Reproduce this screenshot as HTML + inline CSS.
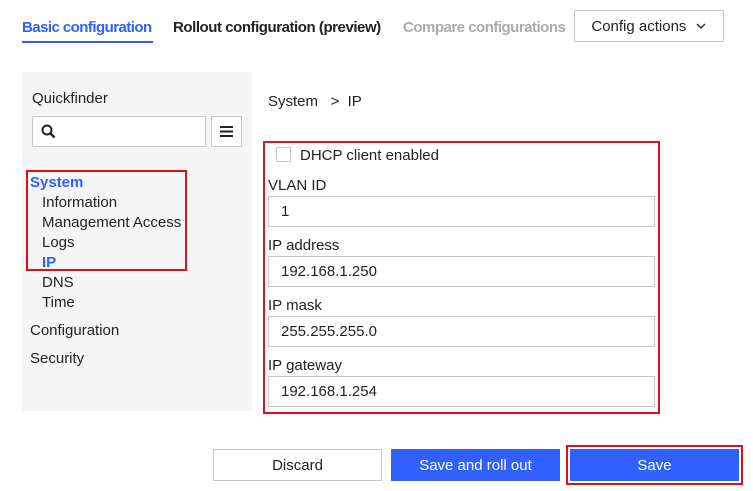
<!DOCTYPE html>
<html><head><style>
*{box-sizing:border-box;margin:0;padding:0}
body{width:753px;height:491px;background:#fff;font-family:"Liberation Sans",sans-serif;color:#222;position:relative;overflow:hidden;font-size:15px}
.a{position:absolute;white-space:nowrap}
.inp{position:absolute;border:1px solid #c8c8c8;background:#fff}
.btn{position:absolute;display:flex;align-items:center;justify-content:center;font-size:15px}
</style></head><body>
<div class="a" style="left:22px;top:19px;font-size:15px;color:#2f5fff;font-weight:bold;letter-spacing:-0.55px">Basic configuration</div>
<div class="a" style="left:22px;top:41px;width:131px;height:2px;background:#2f5fff"></div>
<div class="a" style="left:173px;top:19px;font-size:15px;font-weight:bold;color:#222;letter-spacing:-0.45px">Rollout configuration (preview)</div>
<div class="a" style="left:403px;top:19px;font-size:15px;font-weight:bold;color:#aaa;letter-spacing:-0.5px">Compare configurations</div>
<div class="btn" style="left:574px;top:10px;width:150px;height:32px;border:1px solid #c8c8c8;font-size:15px">Config actions&nbsp;<svg width="12" height="8" viewBox="0 0 12 8" style="margin-left:4px"><path d="M2 2l4 4 4-4" fill="none" stroke="#222" stroke-width="1.3"/></svg></div>

<div class="a" style="left:22px;top:72px;width:230px;height:339px;background:#f5f5f5"></div>
<div class="a" style="left:32px;top:90px">Quickfinder</div>
<div class="inp" style="left:32px;top:116px;width:174px;height:31px"></div>
<svg class="a" style="left:40px;top:123px" width="18" height="18" viewBox="0 0 18 18"><circle cx="7" cy="7" r="4.5" fill="none" stroke="#222" stroke-width="2"/><path d="M10.5 10.5l4 4" stroke="#222" stroke-width="2.4"/></svg>
<div class="inp" style="left:211px;top:116px;width:31px;height:31px"></div>
<svg class="a" style="left:219px;top:124px" width="15" height="15" viewBox="0 0 15 15"><path d="M1 3h13M1 7.5h13M1 12h13" stroke="#222" stroke-width="2"/></svg>
<div class="a" style="left:26px;top:170px;width:161px;height:101px;border:2px solid #e0101a"></div>
<div class="a" style="left:30px;top:174px;color:#2f5fff;font-weight:bold">System</div>
<div class="a" style="left:42px;top:194px">Information</div>
<div class="a" style="left:42px;top:214px">Management Access</div>
<div class="a" style="left:42px;top:234px">Logs</div>
<div class="a" style="left:42px;top:254px;color:#2f5fff;font-weight:bold">IP</div>
<div class="a" style="left:42px;top:274px">DNS</div>
<div class="a" style="left:42px;top:294px">Time</div>
<div class="a" style="left:30px;top:322px">Configuration</div>
<div class="a" style="left:30px;top:350px">Security</div>

<div class="a" style="left:268px;top:93px">System &nbsp; &gt; &nbsp;IP</div>
<div class="a" style="left:263px;top:141px;width:397px;height:273px;border:2px solid #e0101a"></div>
<div class="inp" style="left:276px;top:147px;width:15px;height:15px"></div>
<div class="a" style="left:300px;top:147px">DHCP client enabled</div>
<div class="a" style="left:268px;top:177px">VLAN ID</div>
<div class="inp" style="left:268px;top:196px;width:387px;height:31px"></div>
<div class="a" style="left:281px;top:203px">1</div>
<div class="a" style="left:268px;top:237px">IP address</div>
<div class="inp" style="left:268px;top:256px;width:387px;height:31px"></div>
<div class="a" style="left:281px;top:263px">192.168.1.250</div>
<div class="a" style="left:268px;top:297px">IP mask</div>
<div class="inp" style="left:268px;top:316px;width:387px;height:31px"></div>
<div class="a" style="left:281px;top:323px">255.255.255.0</div>
<div class="a" style="left:268px;top:357px">IP gateway</div>
<div class="inp" style="left:268px;top:376px;width:387px;height:31px"></div>
<div class="a" style="left:281px;top:383px">192.168.1.254</div>

<div class="btn" style="left:213px;top:449px;width:169px;height:32px;border:1px solid #c8c8c8">Discard</div>
<div class="btn" style="left:391px;top:449px;width:169px;height:32px;background:#3060ff;color:#fff">Save and roll out</div>
<div class="a" style="left:566px;top:445px;width:177px;height:40px;border:2px solid #e0101a"></div>
<div class="btn" style="left:570px;top:449px;width:169px;height:32px;background:#3060ff;color:#fff">Save</div>
</body></html>
